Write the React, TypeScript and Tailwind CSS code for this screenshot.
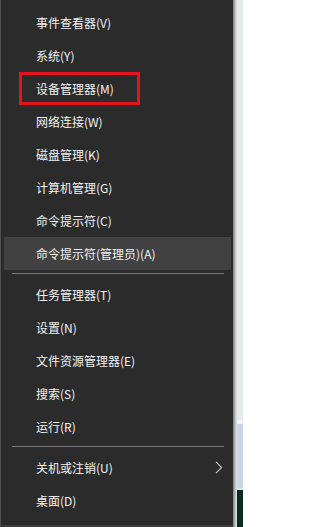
import * as React from "react"

type Entry = { label: string; sub?: boolean; hover?: boolean; marked?: boolean } | "sep"

const entries: Entry[] = [
  { label: "事件查看器(V)" },
  { label: "系统(Y)" },
  { label: "设备管理器(M)", marked: true },
  { label: "网络连接(W)" },
  { label: "磁盘管理(K)" },
  { label: "计算机管理(G)" },
  { label: "命令提示符(C)" },
  { label: "命令提示符(管理员)(A)", hover: true },
  "sep",
  { label: "任务管理器(T)" },
  { label: "设置(N)" },
  { label: "文件资源管理器(E)" },
  { label: "搜索(S)" },
  { label: "运行(R)" },
  "sep",
  { label: "关机或注销(U)", sub: true },
  { label: "桌面(D)" },
]

function Chevron() {
  return (
    <svg width="8" height="13" viewBox="0 0 8 13" className="absolute left-[214px] top-[10px]">
      <path d="M1 0.8 L6.6 6.5 L1 12.2" fill="none" stroke="#c8c8c8" strokeWidth="1.1" />
    </svg>
  )
}

export default function App() {
  return (
    <div
      className="flex w-[243px] h-[527px] overflow-hidden bg-[#2b2b2b]"
      style={{ fontFamily: '"Segoe UI", "Noto Sans CJK SC", "Noto Sans", sans-serif' }}
    >
      {/* context menu */}
      <div className="w-[233px] h-[527px] shrink-0 border-l border-[#505050] border-b-2 border-b-[#3c3c3c] bg-[#2b2b2b] pt-[6px] pb-[8px]">
        {entries.map((e, i) =>
          e === "sep" ? (
            <div key={i} className="h-[8px] pt-[3px] pl-[11px] pr-[9px]">
              <div className="h-px bg-[#7a7a7a]" />
            </div>
          ) : (
            <div
              key={i}
              className={
                e.hover
                  ? "relative h-[33px] flex items-center ml-[3px] mr-[2px] pl-[32px] bg-[#414141] text-[12px] text-[#f2f2f2]"
                  : "relative h-[33px] flex items-center pl-[35px] text-[12px] text-[#f2f2f2]"
              }
            >
              <span className="leading-none">{e.label}</span>
              {e.sub && <Chevron />}
              {e.marked && (
                <div className="absolute left-[18px] top-0 w-[121px] h-[33px] border-[3px] border-[#e3141b]" />
              )}
            </div>
          )
        )}
      </div>

      {/* desktop strip behind the menu */}
      <div className="flex-1 flex h-[527px]">
        <div className="w-[1px] bg-[#8c8c8c]" />
        <div className="w-[1px] bg-[#a8a8a8]" />
        <div className="w-[1px] bg-[#c4c4c4]" />
        <div className="w-[1px] bg-[#d8dcde]" />
        <div className="flex-1 flex flex-col">
          <div className="h-[420px] bg-[#e3ebee]" />
          <div className="h-[4px] bg-[#f2f3f4]" />
          <div className="h-[64px] bg-[#c9d6e6]" />
          <div className="h-[2px] bg-[#dfe5ec]" />
          <div className="flex-1 bg-[#0c2922]" />
        </div>
      </div>
    </div>
  )
}
